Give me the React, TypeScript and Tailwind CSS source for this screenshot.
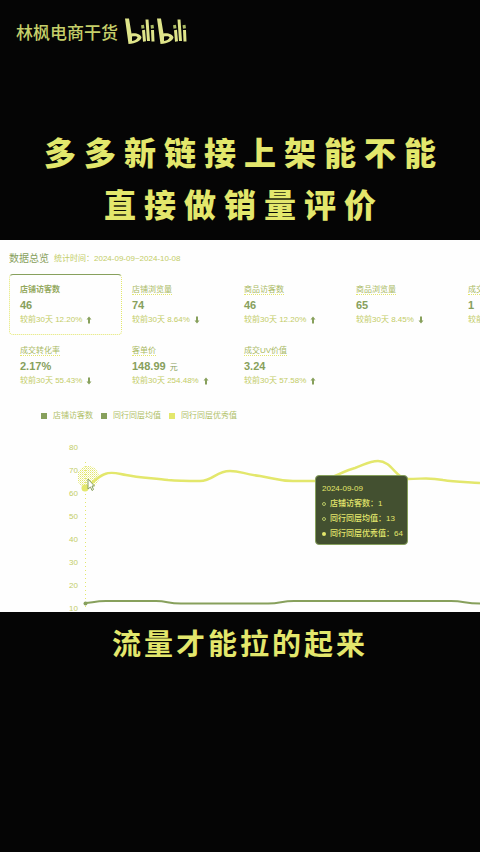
import React from "react";

type Metric = {
  label: string;
  value: string;
  unit?: string;
  change?: string;
  up?: boolean;
};

const rows: Metric[][] = [
  [
    { label: "店铺访客数", value: "46", change: "12.20%", up: true },
    { label: "店铺浏览量", value: "74", change: "8.64%", up: false },
    { label: "商品访客数", value: "46", change: "12.20%", up: true },
    { label: "商品浏览量", value: "65", change: "8.45%", up: false },
    { label: "成交", value: "1", change: "" },
  ],
  [
    { label: "成交转化率", value: "2.17%", change: "55.43%", up: false },
    { label: "客单价", value: "148.99", unit: "元", change: "254.48%", up: true },
    { label: "成交UV价值", value: "3.24", change: "57.58%", up: true },
  ],
];

const legend = [
  { label: "店铺访客数", box: "bg-[#87a05c]" },
  { label: "同行同层均值", box: "bg-[#87a05c]" },
  { label: "同行同层优秀值", box: "bg-[#e3e76c]" },
];

const tips = [
  { label: "店铺访客数", value: "1", dot: "border border-[#b5c564]" },
  { label: "同行同层均值", value: "13", dot: "border border-[#b5c564]" },
  { label: "同行同层优秀值", value: "64", dot: "bg-[#e3e76c]" },
];

function Arrow({ up }: { up?: boolean }) {
  return (
    <svg viewBox="0 0 6 8" className={up ? "h-2 w-1.5" : "h-2 w-1.5 rotate-180"} aria-hidden="true">
      <path d="M3 0.5 5.5 3.5H4V7.5H2V3.5H0.5Z" fill="#87a05c" />
    </svg>
  );
}

function MetricCell({ metric, active }: { metric: Metric; active?: boolean }) {
  return (
    <div
      className={
        active
          ? "-mr-px h-[61px] w-[113px] shrink-0 rounded-sm border border-dotted border-[#e3e76c] border-t-[#87a05c] px-2.5 pt-2 [border-top-style:solid]"
          : "h-[61px] w-28 shrink-0 pl-[11px] pt-[9px]"
      }
    >
      <div className={active ? "h-3.5 text-[8px] leading-[14px] font-bold text-[#94a95e]" : "h-3.5 text-[8px] leading-[14px] text-[#a9b963]"}>
        <span className={active ? "" : "border-b border-dotted border-[#e3e76c]"}>{metric.label}</span>
      </div>
      <div className="h-4 text-[11px] leading-4 font-bold text-[#87a05c]">
        {metric.value}
        {metric.unit && <span className="ml-1 text-[8px] font-normal">{metric.unit}</span>}
      </div>
      <div className="flex h-3.5 items-center gap-1 text-[8px] leading-[14px] whitespace-nowrap text-[#c3cc66]">
        {metric.change ? (
          <>
            <span>较前30天 {metric.change}</span>
            <Arrow up={metric.up} />
          </>
        ) : (
          <span>较前</span>
        )}
      </div>
    </div>
  );
}

function Logo() {
  return (
    <svg viewBox="0 0 64 30" className="h-[30px] w-16" fill="none" stroke="#dfe58a" strokeWidth="3" aria-label="bilibili" role="img">
      <g id="bili">
        <path d="M0 2.500H4L6.500 17.500C11 16.500 16.500 19 16.500 21.500C16 24.500 11 27.500 3.500 28Z" fill="#dfe58a" stroke="none" />
        <path d="M7 20.500C10 20 12.500 20.500 12.500 21.500C12 23 10 24.500 7 25Z" fill="#050505" stroke="none" />
        <path d="M18.500 14 19.500 25.500M22 3.500 23.500 25M27.500 14 28 25.500" />
        <path d="M17.500 9 18 12.500M27 9 27.500 12.500" stroke="#a9b963" />
      </g>
      <use href="#bili" x="32" />
    </svg>
  );
}

function Chart() {
  return (
    <div className="flex h-[174px] overflow-hidden">
      <div className="w-[78px] shrink-0 text-right text-[8px] text-[#c3cd67]">
        {[80, 70, 60, 50, 40, 30, 20, 10].map((n) => (
          <div key={n} className="h-[23px] pt-1.5 leading-[8px]">{n}</div>
        ))}
      </div>
      <div className="relative min-w-0 flex-1">
        <svg viewBox="0 0 402 174" className="block w-full" fill="none" aria-hidden="true">
          <defs>
            <pattern id="halo" width="2" height="2" patternUnits="userSpaceOnUse">
              <rect width="1" height="1" fill="#e3e76c" />
              <rect x="1" y="1" width="1" height="1" fill="#e3e76c" fillOpacity="0.5" />
            </pattern>
          </defs>
          <path d="M7.500 24V170" stroke="#e3e76c" strokeDasharray="1 3" />
          <circle cx="10" cy="39" r="11" fill="url(#halo)" />
          <circle cx="7" cy="50" r="3.500" fill="#e3e76c" />
          <path
            d="M7 50C14 46 20 38 27 36C34 33 41 36 48 37C62 40 78 40 90 42C101 43 111 43 122 43C135 43 138 33 152 33C163 33 165 36 182 38C195 40 200 43 215 43H237C252 43 262 34 277 30C286 27 291 23 300 23C314 23 318 41 330 41C345 41 350 39 365 42C377 44 389 44 402 45"
            stroke="#e3e76c"
            strokeWidth="2.5"
          />
          <path
            d="M7 165C14 165 16 163 28 163H78C90 163 89 165.500 103 165.500H190C203 165.500 203 163 216 163H373C387 163 386 165.500 402 165.500"
            stroke="#87a05c"
            strokeWidth="2"
          />
          <circle cx="7.500" cy="165.500" r="2" fill="#87a05c" />
          <path d="M10 41V51L12.500 49L14 52.500L15.500 51.500L14 48H16.500Z" fill="#fefefe" stroke="#87a05c" />
        </svg>
        <div className="absolute top-[37px] left-[237px] h-[70px] w-[93px] rounded-sm border border-[#87a05c] bg-[#435030] pt-[5px] pl-1.5 text-[8px] leading-[15px] font-medium whitespace-nowrap text-[#e3e76c]">
          <div>2024-09-09</div>
          {tips.map((t) => (
            <div key={t.label} className="flex items-center">
              <span className={"mr-1 size-1 rounded-full " + t.dot} />
              <span>{t.label}：{t.value}</span>
            </div>
          ))}
        </div>
      </div>
    </div>
  );
}

export default function App() {
  return (
    <main className="min-h-screen overflow-hidden bg-[#050505] font-['Liberation_Sans','Noto_Sans_CJK_SC',sans-serif]">
      <header className="flex h-[62px] items-center gap-[7px] pl-4">
        <span className="pt-1.5 text-[17px] leading-6 font-medium text-[#c5cf6a]">林枫电商干货</span>
        <Logo />
      </header>
      <h1 className="h-[178px] pt-[66px] pl-2 text-center text-[32px] leading-[52px] font-black tracking-[8px] text-[#e3e76c]">
        多多新链接上架能不能
        <br />
        直接做销量评价
      </h1>
      <section className="overflow-hidden bg-[#fefefe]">
        <div className="flex h-[34px] items-center gap-[5px] pt-1 pl-[9px]">
          <h2 className="text-[10px] leading-4 text-[#87a05c]">数据总览</h2>
          <p className="text-[8px] leading-4 text-[#c3cd67]">统计时间：2024-09-09~2024-10-08</p>
        </div>
        <div className="pl-[9px]">
          {rows.map((row, r) => (
            <div key={r} className="flex">
              {row.map((m, i) => (
                <MetricCell key={i} metric={m} active={r === 0 && i === 0} />
              ))}
            </div>
          ))}
        </div>
        <ul className="flex h-[42px] items-center gap-2 pb-0.5 pl-[41px] text-[8px] text-[#b0bf66]">
          {legend.map((l) => (
            <li key={l.label} className="flex items-center gap-1.5">
              <span className={"size-1.5 " + l.box} />
              {l.label}
            </li>
          ))}
        </ul>
        <Chart />
      </section>
      <p className="pt-2.5 text-center text-[29px] leading-[46px] font-bold tracking-[3px] text-[#e3e76c]">流量才能拉的起来</p>
    </main>
  );
}
